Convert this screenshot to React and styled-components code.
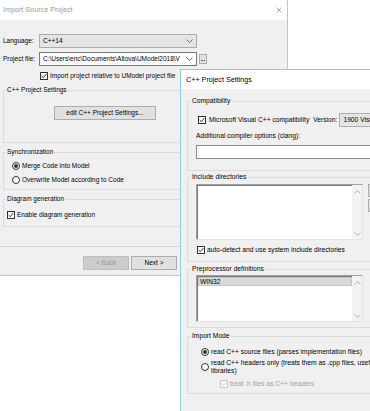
import React from "react";
import styled, { createGlobalStyle } from "styled-components";

const GlobalStyle = createGlobalStyle`
  html, body { margin: 0; padding: 0; background: #ffffff; overflow: hidden; }
  body { font-family: "Liberation Sans", Arial, sans-serif; }
`;

const Desktop = styled.div`
  position: relative;
  width: 370px;
  height: 411px;
  overflow: hidden;
  background: #ffffff;
`;

const Window = styled.section`
  position: absolute;
  left: ${(p) => p.$x}px;
  top: ${(p) => p.$y}px;
  width: ${(p) => p.$w}px;
  height: ${(p) => p.$h}px;
  box-sizing: border-box;
  display: flex;
  flex-direction: column;
  background: #f0f0f0;
  border: 1px solid ${(p) => (p.$active ? "#8fcfdd" : "#c4c4c4")};
  font-size: ${(p) => p.$fs}px;
  line-height: 8px;
  color: #000;
`;

const TitleBar = styled.header`
  flex: none;
  height: ${(p) => p.$h}px;
  display: flex;
  align-items: center;
  padding-left: ${(p) => p.$pad}px;
  background: #ffffff;
  font-size: 7.2px;
  color: ${(p) => (p.$active ? "#000000" : "#999999")};
`;

const TitleText = styled.span`
  flex: 1;
  white-space: nowrap;
`;

const CloseBox = styled.span`
  flex: none;
  width: 16px;
  height: 100%;
  display: flex;
  align-items: center;
  justify-content: center;
`;

const DialogBody = styled.div`
  flex: 1;
  min-height: 0;
  display: flex;
  flex-direction: column;
  align-items: flex-start;
  padding: ${(p) => p.$pad};
`;

const FieldRow = styled.div`
  display: flex;
  align-items: center;
  height: ${(p) => p.$h || 14}px;
  margin-top: ${(p) => p.$mt || 0}px;
  margin-left: ${(p) => p.$ml || 0}px;
  white-space: nowrap;
`;

const FieldLabel = styled.span`
  flex: none;
  width: ${(p) => (p.$w ? `${p.$w}px` : "auto")};
  margin-left: ${(p) => p.$ml || 0}px;
  margin-right: ${(p) => p.$mr || 0}px;
  white-space: nowrap;
  color: ${(p) => (p.$disabled ? "#a0a0a0" : "inherit")};
`;

const Combo = styled.div`
  box-sizing: border-box;
  flex: none;
  width: ${(p) => p.$w}px;
  height: 14px;
  display: flex;
  align-items: center;
  padding: 0 3px;
  border: 1px solid ${(p) => (p.$editable ? "#7a7a7a" : "#adadad")};
  background: ${(p) => (p.$editable ? "#ffffff" : "#e5e5e5")};
  overflow: hidden;
`;

const ComboValue = styled.span`
  flex: 1;
  min-width: 0;
  overflow: hidden;
  white-space: nowrap;
`;

const ChevronSlot = styled.span`
  flex: none;
  display: flex;
  margin-left: 2px;
`;

const BrowseButton = styled.span`
  box-sizing: border-box;
  flex: none;
  width: 8px;
  height: 10px;
  margin-left: 2px;
  display: flex;
  align-items: flex-end;
  justify-content: center;
  padding-bottom: 2px;
  border: 1px solid #adadad;
  background: #e1e1e1;
`;

const DotsGlyph = styled.span`
  display: block;
  width: 4px;
  height: 1px;
  background: repeating-linear-gradient(90deg, #555 0 1px, transparent 1px 1.5px);
`;

const TextInput = styled.div`
  box-sizing: border-box;
  flex: none;
  width: ${(p) => p.$w}px;
  height: 14px;
  margin-top: ${(p) => p.$mt || 0}px;
  border: 1px solid #8c8c8c;
  background: #ffffff;
`;

const CheckBoxBox = styled.span`
  box-sizing: border-box;
  flex: none;
  width: 8px;
  height: 8px;
  margin-left: ${(p) => p.$ml || 0}px;
  border: 1px solid ${(p) => (p.$disabled ? "#c8c8c8" : "#333333")};
  background: #ffffff;
  display: flex;
  align-items: center;
  justify-content: center;
`;

const RadioCircle = styled.span`
  box-sizing: border-box;
  flex: none;
  width: 8px;
  height: 8px;
  margin-left: ${(p) => p.$ml || 0}px;
  border-radius: 50%;
  border: 1px solid #333333;
  background: #ffffff;
  display: flex;
  align-items: center;
  justify-content: center;
  &::after {
    content: "";
    width: 4px;
    height: 4px;
    border-radius: 50%;
    background: ${(p) => (p.$checked ? "#333333" : "transparent")};
  }
`;

const Group = styled.fieldset`
  box-sizing: border-box;
  flex: none;
  width: ${(p) => p.$w}px;
  min-width: 0;
  margin: ${(p) => p.$mt || 0}px 0 0 0;
  padding: 0;
  border: 1px solid #dcdcdc;
`;

const GroupTitle = styled.legend`
  margin-left: ${(p) => p.$ml}px;
  padding: 0 1px;
  height: 8px;
  line-height: 8px;
  white-space: nowrap;
`;

const GroupBody = styled.div`
  display: flex;
  flex-direction: column;
  align-items: flex-start;
  padding: ${(p) => p.$pad};
`;

const PushButton = styled.span`
  box-sizing: border-box;
  flex: none;
  width: ${(p) => p.$w}px;
  height: 14px;
  margin-left: ${(p) => p.$ml || 0}px;
  display: flex;
  align-items: center;
  justify-content: center;
  border: 1px solid ${(p) => (p.$disabled ? "#bfbfbf" : "#adadad")};
  background: ${(p) => (p.$disabled ? "#cccccc" : "#e1e1e1")};
  color: ${(p) => (p.$disabled ? "#9a9a9a" : "#000000")};
  white-space: nowrap;
`;

const Footer = styled.footer`
  flex: none;
  box-sizing: border-box;
  height: 29px;
  display: flex;
  align-items: flex-start;
  gap: 2px;
  padding: 9px 0 0 83px;
  border-top: 1px solid #d6d6d6;
`;

const OptionRow = styled.div`
  display: flex;
  align-items: center;
  min-height: ${(p) => p.$h || 10}px;
  margin-top: ${(p) => p.$mt || 0}px;
  white-space: nowrap;
`;

const MultiLine = styled.span`
  display: flex;
  flex-direction: column;
  margin-left: ${(p) => p.$ml || 0}px;
  white-space: nowrap;
`;

const ListRow = styled.div`
  display: flex;
  align-items: flex-start;
  gap: 5px;
`;

const ListBox = styled.div`
  box-sizing: border-box;
  flex: none;
  width: ${(p) => p.$w}px;
  height: ${(p) => p.$h}px;
  display: flex;
  border-style: solid;
  border-width: 1px;
  border-color: #a0a0a0 #e3e3e3 #e3e3e3 #a0a0a0;
  box-shadow: inset 1px 1px 0 #7a7a7a;
  background: #ffffff;
`;

const ListItems = styled.div`
  flex: 1;
  min-width: 0;
  padding: 1px 0 0 1px;
`;

const ListItem = styled.div`
  box-sizing: border-box;
  height: 9px;
  padding-left: 1px;
  line-height: 7px;
  background: ${(p) => (p.$selected ? "#d9d9d9" : "transparent")};
  border: 1px solid ${(p) => (p.$selected ? "#c4c4c4" : "transparent")};
`;

const ScrollBar = styled.div`
  flex: none;
  width: 10px;
  display: flex;
  flex-direction: column;
  justify-content: space-between;
  align-items: center;
  padding: 5px 0 3px;
  background: #f3f3f3;
`;

const SideButtons = styled.div`
  display: flex;
  flex-direction: column;
  gap: 2px;
`;

const SideButton = styled.span`
  box-sizing: border-box;
  width: 24px;
  height: 13px;
  border: 1px solid #adadad;
  background: #e1e1e1;
`;

const Chevron = ({ up = false, color = "#606060" }) => (
  <svg width="7" height="4" viewBox="0 0 7 4">
    <polyline
      points={up ? "0.5,3.5 3.5,0.5 6.5,3.5" : "0.5,0.5 3.5,3.5 6.5,0.5"}
      fill="none"
      stroke={color}
      strokeWidth="0.9"
    />
  </svg>
);

const Check = ({ disabled, ml }) => (
  <CheckBoxBox $disabled={disabled} $ml={ml}>
    <svg width="6" height="6" viewBox="0 0 6 6">
      <polyline
        points="0.6,3 2.3,4.7 5.4,1.1"
        fill="none"
        stroke={disabled ? "#c8c8c8" : "#222222"}
        strokeWidth="0.9"
      />
    </svg>
  </CheckBoxBox>
);

const CloseIcon = () => (
  <svg width="6" height="6" viewBox="0 0 6 6">
    <path d="M0.5 0.5 L5.5 5.5 M5.5 0.5 L0.5 5.5" stroke="#9a9a9a" strokeWidth="0.8" fill="none" />
  </svg>
);

const ImportDialog = () => (
  <Window $x={-1} $y={-1} $w={289} $h={277} $fs={6.5}>
    <TitleBar $h={20} $pad={3}>
      <TitleText>Import Source Project</TitleText>
      <CloseBox>
        <CloseIcon />
      </CloseBox>
    </TitleBar>
    <DialogBody $pad="14px 0 0 3px">
      <FieldRow>
        <FieldLabel $w={36}>Language:</FieldLabel>
        <Combo $w={158}>
          <ComboValue>C++14</ComboValue>
          <ChevronSlot>
            <Chevron />
          </ChevronSlot>
        </Combo>
      </FieldRow>
      <FieldRow $mt={4}>
        <FieldLabel $w={36}>Project file:</FieldLabel>
        <Combo $w={158} $editable>
          <ComboValue>C:\Users\enc\Documents\Altova\UModel2018\V</ComboValue>
          <ChevronSlot>
            <Chevron />
          </ChevronSlot>
        </Combo>
        <BrowseButton title="...">
          <DotsGlyph />
        </BrowseButton>
      </FieldRow>
      <FieldRow $h={10} $mt={5} $ml={37}>
        <Check />
        <FieldLabel $ml={2}>Import project relative to UModel project file</FieldLabel>
      </FieldRow>

      <Group $w={279} $mt={5}>
        <GroupTitle $ml={2}>C++ Project Settings</GroupTitle>
        <GroupBody $pad="12px 0 22px 50px">
          <PushButton $w={102}>edit C++ Project Settings...</PushButton>
        </GroupBody>
      </Group>

      <Group $w={279} $mt={5}>
        <GroupTitle $ml={2}>Synchronization</GroupTitle>
        <GroupBody $pad="5px 0 4px 8px">
          <OptionRow>
            <RadioCircle $checked />
            <FieldLabel $ml={2}>Merge Code into Model</FieldLabel>
          </OptionRow>
          <OptionRow $mt={4}>
            <RadioCircle />
            <FieldLabel $ml={2}>Overwrite Model according to Code</FieldLabel>
          </OptionRow>
        </GroupBody>
      </Group>

      <Group $w={279} $mt={5}>
        <GroupTitle $ml={2}>Diagram generation</GroupTitle>
        <GroupBody $pad="7px 0 6px 3px">
          <OptionRow>
            <Check />
            <FieldLabel $ml={2}>Enable diagram generation</FieldLabel>
          </OptionRow>
        </GroupBody>
      </Group>
    </DialogBody>
    <Footer>
      <PushButton $w={46} $disabled>
        &lt; Back
      </PushButton>
      <PushButton $w={46}>Next &gt;</PushButton>
      <PushButton $w={46} $ml={6}>
        Cancel
      </PushButton>
    </Footer>
  </Window>
);

const SettingsDialog = () => (
  <Window $x={180} $y={69} $w={330} $h={370} $fs={6.7} $active>
    <TitleBar $h={19} $pad={5} $active>
      <TitleText>C++ Project Settings</TitleText>
    </TitleBar>
    <DialogBody $pad="8px 0 0 6px">
      <Group $w={300}>
        <GroupTitle $ml={3}>Compatibility</GroupTitle>
        <GroupBody $pad="8px 0 11px 8px">
          <FieldRow>
            <Check ml={2} />
            <FieldLabel $ml={3}>Microsoft Visual C++ compatibility</FieldLabel>
            <FieldLabel $ml={4} $mr={2}>
              Version:
            </FieldLabel>
            <Combo $w={90}>
              <ComboValue>1900 Visual Studio 2015</ComboValue>
            </Combo>
          </FieldRow>
          <FieldRow $h={8} $mt={5}>
            <FieldLabel>Additional compiler options (clang):</FieldLabel>
          </FieldRow>
          <TextInput $w={220} $mt={5} />
        </GroupBody>
      </Group>

      <Group $w={300} $mt={2}>
        <GroupTitle $ml={3}>Include directories</GroupTitle>
        <GroupBody $pad="3px 0 6px 8px">
          <ListRow>
            <ListBox $w={167} $h={56}>
              <ListItems />
              <ScrollBar>
                <Chevron up color="#a8a8a8" />
                <Chevron color="#a8a8a8" />
              </ScrollBar>
            </ListBox>
            <SideButtons>
              <SideButton />
              <SideButton />
            </SideButtons>
          </ListRow>
          <OptionRow $mt={5}>
            <Check ml={1} />
            <FieldLabel $ml={2}>auto-detect and use system include directories</FieldLabel>
          </OptionRow>
        </GroupBody>
      </Group>

      <Group $w={300} $mt={3}>
        <GroupTitle $ml={3}>Preprocessor definitions</GroupTitle>
        <GroupBody $pad="2px 0 5px 8px">
          <ListBox $w={167} $h={47}>
            <ListItems>
              <ListItem $selected>WIN32</ListItem>
            </ListItems>
            <ScrollBar>
              <Chevron up color="#a8a8a8" />
              <Chevron color="#a8a8a8" />
            </ScrollBar>
          </ListBox>
        </GroupBody>
      </Group>

      <Group $w={300} $mt={4}>
        <GroupTitle $ml={3}>Import Mode</GroupTitle>
        <GroupBody $pad="8px 0 5px 8px">
          <OptionRow $h={8}>
            <RadioCircle $checked $ml={5} />
            <FieldLabel $ml={2}>read C++ source files (parses implementation files)</FieldLabel>
          </OptionRow>
          <OptionRow $mt={3}>
            <RadioCircle $ml={5} />
            <MultiLine $ml={2}>
              <span>read C++ headers only (treats them as .cpp files, useful for</span>
              <span>libraries)</span>
            </MultiLine>
          </OptionRow>
          <OptionRow $h={8} $mt={5}>
            <Check disabled ml={24} />
            <FieldLabel $ml={2} $disabled>
              treat .h files as C++ headers
            </FieldLabel>
          </OptionRow>
        </GroupBody>
      </Group>
    </DialogBody>
  </Window>
);

export default function App() {
  return (
    <>
      <GlobalStyle />
      <Desktop>
        <ImportDialog />
        <SettingsDialog />
      </Desktop>
    </>
  );
}
